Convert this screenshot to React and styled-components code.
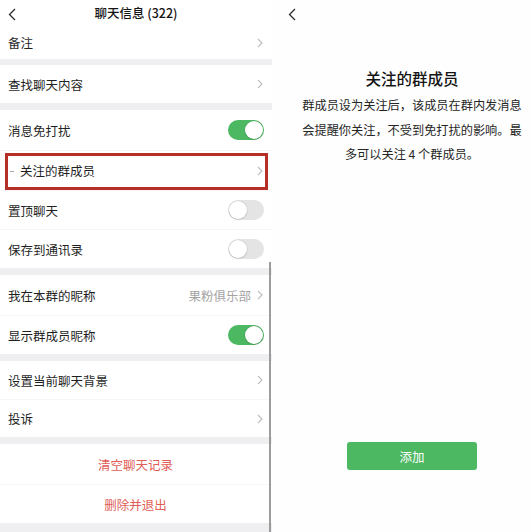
import React from 'react';
import styled, { createGlobalStyle } from 'styled-components';

const GlobalStyle = createGlobalStyle`
  html, body {
    margin: 0;
    padding: 0;
    background: #ffffff;
  }
  body {
    font-family: "Noto Sans CJK SC", "Noto Sans", "Liberation Sans", sans-serif;
    -webkit-font-smoothing: antialiased;
  }
`;

const Page = styled.div`
  display: flex;
  width: 530px;
  height: 532px;
  overflow: hidden;
  background: #fefefe;
`;

/* ---------- left: chat settings ---------- */

const SettingsPanel = styled.div`
  position: relative;
  width: 272px;
  flex-shrink: 0;
  display: flex;
  flex-direction: column;
  background: #efeff1;
`;

const ScrollIndicator = styled.div`
  position: absolute;
  left: 269px;
  top: 262px;
  bottom: 0;
  width: 2px;
  background: #9c9c9c;
`;

const NavBar = styled.div`
  position: relative;
  height: 26px;
  display: flex;
  align-items: center;
  justify-content: center;
  background: #ffffff;
  font-size: 12.5px;
  font-weight: 500;
  color: #151515;
  padding-bottom: 2px;
  box-sizing: border-box;
`;

const BackButton = styled.span`
  position: absolute;
  left: ${p => p.$left}px;
  top: 8px;
  display: flex;
`;

const Group = styled.div`
  background: #ffffff;
  margin-bottom: ${p => p.$gap ?? 7}px;
`;

const Row = styled.div`
  position: relative;
  height: ${p => p.$h ?? 39}px;
  display: flex;
  align-items: center;
  justify-content: ${p => (p.$center ? 'center' : 'space-between')};
  padding: 0 9px 0 ${p => p.$indent ?? 8}px;
  box-sizing: border-box;
  font-size: 12.5px;
  color: ${p => (p.$danger ? '#df5d57' : '#1f1f1f')};

  & + & {
    border-top: 1px solid #f6f6f6;
  }

  ${p =>
    p.$marked &&
    `
    &::before {
      content: '';
      position: absolute;
      left: 10px;
      top: 50%;
      width: 4px;
      height: 1px;
      background: #a8a8a8;
    }
    &::after {
      content: '';
      position: absolute;
      left: 5px;
      right: 4px;
      top: 2px;
      bottom: 0;
      border: 3px solid #b52e28;
    }
  `}
`;

const Trailing = styled.span`
  display: flex;
  align-items: center;
  gap: 6px;
  color: #a3a3a3;
`;

const Switch = styled.span`
  position: relative;
  width: 36px;
  height: 20px;
  border-radius: 10px;
  margin-right: -1px;
  background: ${p => (p.$on ? '#4cb862' : '#e4e4e4')};

  &::after {
    content: '';
    position: absolute;
    top: 1px;
    left: ${p => (p.$on ? '17px' : '1px')};
    width: 18px;
    height: 18px;
    border-radius: 50%;
    background: #ffffff;
    box-shadow: 0 0 0 0.5px rgba(0, 0, 0, 0.1), 0 1px 2px rgba(0, 0, 0, 0.1);
  }
`;

const BottomFill = styled.div`
  flex: 1;
  background: #efeff1;
`;

const Chevron = () => (
  <svg width="6" height="10" viewBox="0 0 6 10">
    <polyline points="1,1 5,5 1,9" fill="none" stroke="#bdbdbd" strokeWidth="1.1" />
  </svg>
);

const BackIcon = () => (
  <svg width="8" height="13" viewBox="0 0 8 13">
    <polyline points="7,1 1.5,6.5 7,12" fill="none" stroke="#2a2a2a" strokeWidth="1.3" />
  </svg>
);

/* ---------- right: focused members info ---------- */

const InfoPanel = styled.div`
  position: relative;
  flex: 1;
  display: flex;
  flex-direction: column;
  align-items: center;
  padding: 0 0 62px 22px;
  background: #fefefe;
`;

const InfoTitle = styled.h2`
  margin: 67px 0 4px;
  font-size: 15.5px;
  line-height: 22px;
  font-weight: 500;
  color: #141414;
`;

const InfoText = styled.p`
  margin: 0;
  width: 232px;
  text-align: center;
  font-size: 12.2px;
  line-height: 24.5px;
  color: #262626;
`;

const AddButton = styled.button`
  margin-top: auto;
  width: 130px;
  height: 28px;
  border: none;
  border-radius: 3px;
  background: #4db862;
  color: #ffffff;
  font-family: inherit;
  font-size: 12.5px;
`;

export default function App() {
  return (
    <Page>
      <GlobalStyle />
      <SettingsPanel>
        <NavBar>
          <BackButton $left={8}><BackIcon /></BackButton>
          聊天信息 (322)
        </NavBar>

        <Group $gap={6}>
          <Row $h={33}>备注<Chevron /></Row>
        </Group>

        <Group>
          <Row $h={38}>查找聊天内容<Chevron /></Row>
        </Group>

        <Group>
          <Row $h={40}>消息免打扰<Switch $on /></Row>
          <Row $h={40} $indent={20} $marked>关注的群成员<Chevron /></Row>
          <Row>置顶聊天<Switch /></Row>
          <Row>保存到通讯录<Switch /></Row>
        </Group>

        <Group>
          <Row $h={40}>
            我在本群的昵称
            <Trailing>果粉俱乐部<Chevron /></Trailing>
          </Row>
          <Row>显示群成员昵称<Switch $on /></Row>
        </Group>

        <Group>
          <Row $h={38}>设置当前聊天背景<Chevron /></Row>
          <Row $h={38}>投诉<Chevron /></Row>
        </Group>

        <Group $gap={0}>
          <Row $h={40} $center $danger>清空聊天记录</Row>
          <Row $center $danger>删除并退出</Row>
        </Group>
        <BottomFill />
        <ScrollIndicator />
      </SettingsPanel>

      <InfoPanel>
        <BackButton $left={16}><BackIcon /></BackButton>
        <InfoTitle>关注的群成员</InfoTitle>
        <InfoText>
          群成员设为关注后，该成员在群内发消息<br />
          会提醒你关注，不受到免打扰的影响。最<br />
          多可以关注 4 个群成员。
        </InfoText>
        <AddButton>添加</AddButton>
      </InfoPanel>
    </Page>
  );
}
